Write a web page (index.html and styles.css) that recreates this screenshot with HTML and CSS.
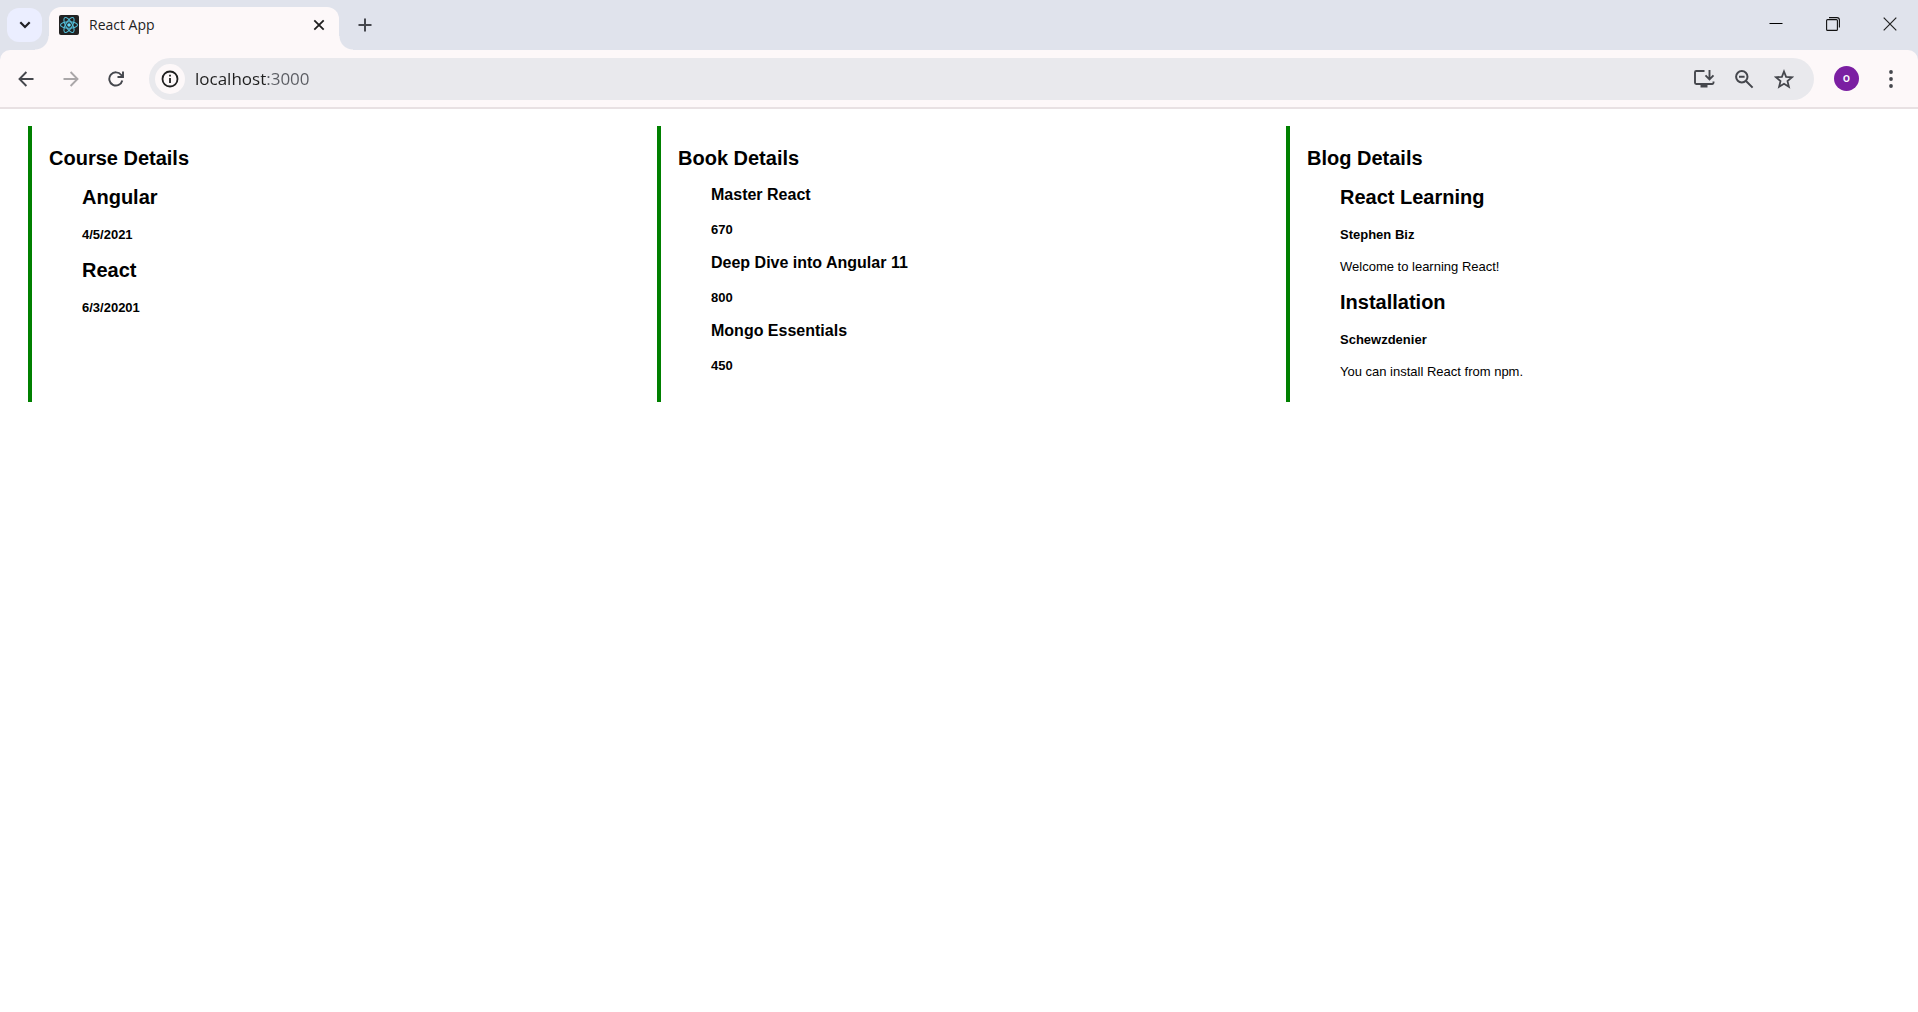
FILE: index.html
```html
<!DOCTYPE html>
<html lang="en">
<head>
<meta charset="utf-8">
<meta name="viewport" content="width=device-width, initial-scale=1">
<title>React App</title>
<link rel="stylesheet" href="styles.css">
</head>
<body>
<header class="browser">
  <div class="tab-strip">
    <button class="tab-search" aria-label="Search tabs">
      <svg width="12" height="8" viewBox="0 0 12 8" fill="none" stroke="#1f1f24" stroke-width="2.2"><path d="M1.300 1.300 6 6l4.700-4.700"/></svg>
    </button>
    <div class="tab">
      <svg class="favicon" width="20" height="20" viewBox="0 0 20 20">
        <rect width="20" height="20" rx="2" fill="#222"/>
        <g fill="none" stroke="#53bfd9" stroke-width="1.100">
          <ellipse cx="10" cy="10" rx="8.500" ry="3.300"/>
          <ellipse cx="10" cy="10" rx="8.500" ry="3.300" transform="rotate(60 10 10)"/>
          <ellipse cx="10" cy="10" rx="8.500" ry="3.300" transform="rotate(120 10 10)"/>
        </g>
        <circle cx="10" cy="10" r="1.800" fill="#61dafb"/>
      </svg>
      <span class="tab-title">React App</span>
      <button class="icon-button tab-close" aria-label="Close tab">
        <svg width="12" height="12" viewBox="0 0 12 12" stroke="#1f1f1f" stroke-width="1.800"><path d="m1.300 1.300 9.400 9.400m0-9.400-9.400 9.400"/></svg>
      </button>
    </div>
    <button class="icon-button new-tab" aria-label="New tab">
      <svg width="14" height="14" viewBox="0 0 14 14" stroke="#45474d" stroke-width="2"><path d="M7 .500v13M.500 7h13"/></svg>
    </button>
    <div class="window-controls">
      <button class="window-button" aria-label="Minimize">
        <svg width="14" height="14" viewBox="0 0 14 14" stroke="#000"><path d="M.500 6.500h13"/></svg>
      </button>
      <button class="window-button" aria-label="Restore">
        <svg width="14" height="14" viewBox="0 0 14 14" fill="none" stroke="#111" stroke-width="1.100"><rect x=".600" y="2.600" width="10.800" height="10.800" rx="1"/><path d="M3 .600h8q2.400 0 2.400 2.400v7.500"/></svg>
      </button>
      <button class="window-button" aria-label="Close">
        <svg width="14" height="14" viewBox="0 0 14 14" stroke="#222" stroke-width="1.200"><path d="m.700.700 12.600 12.600m0-12.600L.700 13.300"/></svg>
      </button>
    </div>
  </div>
  <div class="toolbar">
    <nav class="history" aria-label="History">
      <button class="icon-button" aria-label="Back">
        <svg width="16" height="16" viewBox="0 0 16 16" fill="none" stroke="#45474d" stroke-width="1.900"><path d="M15.500 8H1.600M8.400 1 1.500 8l6.900 7"/></svg>
      </button>
      <button class="icon-button" aria-label="Forward" disabled>
        <svg width="16" height="16" viewBox="0 0 16 16" fill="none" stroke="#aaa7a9" stroke-width="1.900"><path d="M.500 8h13.900M7.600 1l6.900 7-6.900 7"/></svg>
      </button>
      <button class="icon-button" aria-label="Reload">
        <svg width="16" height="16" viewBox="0 0 16 16" fill="none" stroke="#45474d" stroke-width="1.900"><path d="M14.300 9.500A6.600 6.600 0 1 1 13.200 4L15 6"/><path d="M15 .500V6H9.500"/></svg>
      </button>
    </nav>
    <div class="omnibox">
      <button class="site-info" aria-label="View site information">
        <svg width="18" height="18" viewBox="0 0 18 18"><circle cx="9" cy="9" r="7.500" fill="none" stroke="#1f1f1f" stroke-width="1.800"/><path d="M8.100 8h1.800v5H8.100zM8.100 4.800h1.800v1.800H8.100z" fill="#1f1f1f"/></svg>
      </button>
      <input class="address" type="text" aria-label="Address" value="localhost:3000" spellcheck="false">
      <div class="page-actions">
        <button class="icon-button" aria-label="Install app">
          <svg width="22" height="20" viewBox="0 0 22 20" fill="none" stroke="#45474d" stroke-width="1.900"><path d="M11.500 2H3.200Q2 2 2 3.200v10.600Q2 15 3.200 15h16.100q1.200 0 1.200-1.200V12.500M16.500 1v9M12.500 6.300l4 4 4-4"/><path d="M7.500 15h7v3.500h-7z" fill="#45474d" stroke="none"/></svg>
        </button>
        <button class="icon-button" aria-label="Zoom">
          <svg width="20" height="20" viewBox="0 0 20 20" fill="none" stroke="#45474d" stroke-width="2"><circle cx="7.800" cy="7.800" r="5.700"/><path d="m12 12 6.600 6.600M5 7.800h5.600"/></svg>
        </button>
        <button class="icon-button" aria-label="Bookmark this page">
          <svg width="20" height="20" viewBox="0 0 20 20" fill="none" stroke="#45474d" stroke-width="1.800"><path d="m10 2.500 2.100 5.300 5.900.500-4.500 3.800 1.400 5.700-4.900-3-4.900 3 1.400-5.700L2 8.300l5.900-.500z"/></svg>
        </button>
      </div>
    </div>
    <button class="avatar" aria-label="Profile">o</button>
    <button class="icon-button" aria-label="Menu">
      <svg width="4" height="18" viewBox="0 0 4 18" fill="#45474d"><circle cx="2" cy="2" r="1.900"/><circle cx="2" cy="9" r="1.900"/><circle cx="2" cy="16" r="1.900"/></svg>
    </button>
  </div>
</header>
<main class="details">
  <section class="column">
    <h1 class="heading">Course Details</h1>
    <ul class="list">
      <li><h2 class="title">Angular</h2><h4 class="meta">4/5/2021</h4></li>
      <li><h2 class="title">React</h2><h4 class="meta">6/3/20201</h4></li>
    </ul>
  </section>
  <section class="column">
    <h1 class="heading">Book Details</h1>
    <ul class="list">
      <li><h3 class="subtitle">Master React</h3><h4 class="meta">670</h4></li>
      <li><h3 class="subtitle">Deep Dive into Angular 11</h3><h4 class="meta">800</h4></li>
      <li><h3 class="subtitle">Mongo Essentials</h3><h4 class="meta">450</h4></li>
    </ul>
  </section>
  <section class="column">
    <h1 class="heading">Blog Details</h1>
    <ul class="list">
      <li><h2 class="title">React Learning</h2><h4 class="meta">Stephen Biz</h4><p class="text">Welcome to learning React!</p></li>
      <li><h2 class="title">Installation</h2><h4 class="meta">Schewzdenier</h4><p class="text">You can install React from npm.</p></li>
    </ul>
  </section>
</main>
</body>
</html>
```
FILE: styles.css
```css
* { box-sizing: border-box; }

body {
  margin: 0;
  background: #fff;
  color: #000;
  font: 13px/15px "Liberation Sans", Arial, sans-serif;
}

button, input {
  margin: 0;
  padding: 0;
  border: 0;
  background: none;
  font: inherit;
}

svg { display: block; }

/* Browser frame */
.browser {
  background: #e0e3ec;
  font-family: "Open Sans", "Noto Sans", sans-serif;
}

.tab-strip {
  display: flex;
  align-items: flex-start;
  height: 50px;
  padding: 7px 0 0 7px;
}

.tab-search {
  display: grid;
  place-items: center;
  width: 35px;
  height: 34px;
  margin: 1px 7px 0 0;
  border-radius: 12px;
  background: #ebeeff;
}

.tab {
  position: relative;
  display: flex;
  align-items: center;
  gap: 10px;
  width: 290px;
  height: 43px;
  padding: 0 8px 7px 10px;
  border-radius: 12px 12px 0 0;
  background: #fdf8f9;
}

/* Curved feet where the tab meets the toolbar */
.tab::before, .tab::after {
  content: "";
  position: absolute;
  bottom: 0;
  width: 14px;
  height: 14px;
}
.tab::before {
  right: 100%;
  background: radial-gradient(circle at 0 0, transparent 13px, #fdf8f9 14px);
}
.tab::after {
  left: 100%;
  background: radial-gradient(circle at 100% 0, transparent 13px, #fdf8f9 14px);
}

.tab-title {
  flex: 1;
  color: #1f1f1f;
  font-size: 14px;
  line-height: 20px;
}

.icon-button {
  display: grid;
  place-items: center;
  width: 24px;
  height: 36px;
  flex: none;
}

.new-tab { margin-left: 14px; }

.window-controls {
  display: flex;
  margin-left: auto;
}

.window-button {
  display: grid;
  place-items: center;
  width: 57px;
  height: 34px;
}

.toolbar {
  display: flex;
  align-items: center;
  height: 59px;
  padding: 0 15px 0 14px;
  border-bottom: 2px solid #e8e1e3;
  border-radius: 10px 10px 0 0;
  background: #fdf8f9;
}

.history {
  display: flex;
  gap: 21px;
  margin-right: 21px;
}

.omnibox {
  display: flex;
  flex: 1;
  align-items: center;
  height: 42px;
  margin-right: 20px;
  padding: 0 18px 0 6px;
  border-radius: 21px;
  background: #e9e9ed;
}

.site-info {
  display: grid;
  place-items: center;
  width: 30px;
  height: 30px;
  border-radius: 50%;
  background: #fdf8f9;
}

/* The host is darker than the port */
.address {
  flex: 1;
  min-width: 0;
  height: 24px;
  margin-left: 10px;
  background: linear-gradient(90deg, #1f1f1f 72px, #5a5c62 72px);
  background-clip: text;
  color: transparent;
  font-size: 17px;
  line-height: 24px;
}

.page-actions {
  display: flex;
  gap: 16px;
}

.avatar {
  width: 25px;
  height: 25px;
  margin-right: 20px;
  padding-bottom: 2px;
  border-radius: 50%;
  background: #7b1fa2;
  color: #fff;
  font-size: 12px;
  font-weight: 600;
  line-height: 22px;
}

/* Page */
.details {
  display: grid;
  grid-template-columns: repeat(3, 1fr);
  padding: 17px 3px 17px 28px;
}

.column {
  padding: 21px 18px 23px 17px;
  border-left: 4px solid green;
}

.heading {
  margin: 0;
  font-size: 20px;
  line-height: 22px;
}

.title {
  margin: 0;
  font-size: 20px;
  line-height: 23px;
}

.list {
  display: grid;
  gap: 17px;
  margin: 17px 0 0;
  padding-left: 33px;
  list-style: none;
}

.subtitle {
  margin: 0;
  font-size: 16px;
  line-height: 18px;
}

.meta {
  margin: 18px 0 0;
  font-size: 13px;
  line-height: 15px;
}

.text { margin: 17px 0 0; }
```
